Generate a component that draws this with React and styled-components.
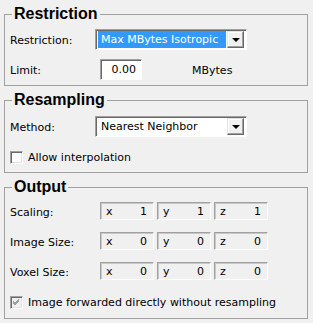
import React from "react";
import styled, { createGlobalStyle } from "styled-components";

const GlobalStyle = createGlobalStyle`
  body {
    margin: 0;
    background: #f0f0f0;
    font-family: "DejaVu Sans", "Liberation Sans", sans-serif;
    font-size: 11px;
    color: #000;
  }
`;

const Page = styled.div`
  display: flex;
  flex-direction: column;
  gap: 5px;
  padding: 5px 5px 0 4px;
  width: 313px;
  box-sizing: border-box;
`;

const Group = styled.fieldset`
  margin: 0;
  padding: 0 5px;
  border: 1px solid #a0a0a0;
  min-width: 0;
`;

const Title = styled.legend`
  font-family: "Liberation Sans", Arial, sans-serif;
  font-weight: bold;
  font-size: 16px;
  line-height: 18px;
  padding: 0 2px;
  margin-left: 2px;
`;

const Body = styled.div`
  display: flex;
  flex-direction: column;
  gap: ${(p) => p.$gap}px;
  padding-top: ${(p) => p.$top}px;
  padding-bottom: ${(p) => p.$bottom}px;
`;

const Row = styled.div`
  display: flex;
  align-items: center;
  height: ${(p) => p.$h || 21}px;
`;

const Label = styled.span`
  width: 85px;
  flex: none;
  padding-top: 2px;
`;

const Combo = styled.div`
  width: 152px;
  height: 21px;
  box-sizing: border-box;
  display: flex;
  align-items: center;
  padding: 1px 2px 1px 2px;
  background: #fff;
  border: 1px solid;
  border-color: #a0a0a0 #fff #fff #a0a0a0;
  box-shadow: inset 1px 1px 0 #696969;
`;

const ComboText = styled.div`
  flex: 1;
  height: 17px;
  line-height: 17px;
  padding-left: 3px;
  margin-right: 1px;
  white-space: nowrap;
  overflow: hidden;
  background: ${(p) => (p.$selected ? "#3399ff" : "#fff")};
  color: ${(p) => (p.$selected ? "#fff" : "#000")};
`;

const DropButton = styled.div`
  width: 17px;
  height: 17px;
  box-sizing: border-box;
  flex: none;
  background: #f0f0f0;
  border: 1px solid;
  border-color: #e3e3e3 #696969 #696969 #e3e3e3;
  box-shadow: inset -1px -1px 0 #a0a0a0, inset 1px 1px 0 #fff;
  display: flex;
  align-items: center;
  justify-content: center;

  &::after {
    content: "";
    border-left: 4px solid transparent;
    border-right: 4px solid transparent;
    border-top: 4px solid #000;
  }
`;

const TextInput = styled.div`
  margin-left: 5px;
  width: 42px;
  height: 21px;
  box-sizing: border-box;
  background: #fff;
  border: 1px solid;
  border-color: #a0a0a0 #fff #fff #a0a0a0;
  box-shadow: inset 1px 1px 0 #696969;
  text-align: right;
  padding: 0 5px;
  line-height: 20px;
`;

const Unit = styled.span`
  margin-left: 50px;
  padding-top: 2px;
`;

const Fields = styled.div`
  display: flex;
  gap: 3px;
  margin-left: 5px;
`;

const Field = styled.div`
  width: 54px;
  height: 18px;
  box-sizing: border-box;
  display: flex;
  justify-content: space-between;
  align-items: center;
  padding: 1px 6px 0 5px;
  border: 1px solid;
  border-color: #a0a0a0 #fff #fff #a0a0a0;
  box-shadow: inset 1px 1px 0 #c8c8c8;
`;

const CheckRow = styled.label`
  display: flex;
  align-items: center;
  gap: 5px;
  height: 13px;
`;

const Box = styled.span`
  width: 13px;
  height: 13px;
  box-sizing: border-box;
  flex: none;
  background: ${(p) => (p.$disabled ? "#f0f0f0" : "#fff")};
  border: 1px solid;
  border-color: #a0a0a0 #fff #fff #a0a0a0;
  box-shadow: inset 1px 1px 0 #696969, inset -1px -1px 0 #e3e3e3;
  display: flex;
  align-items: center;
  justify-content: center;
`;

const Check = () => (
  <svg width="9" height="9" viewBox="0 0 9 9">
    <path d="M1 4 L3 6 L7 2 M1 5 L3 7 L7 3 M1 3 L3 5 L7 1" stroke="#a0a0a0" strokeWidth="1" fill="none" />
  </svg>
);

const outputRows = [
  { label: "Scaling:", values: ["1", "1", "1"] },
  { label: "Image Size:", values: ["0", "0", "0"] },
  { label: "Voxel Size:", values: ["0", "0", "0"] },
];

export default function App() {
  return (
    <>
      <GlobalStyle />
      <Page>
        <Group>
          <Title>Restriction</Title>
          <Body $top={6} $gap={9} $bottom={5}>
            <Row>
              <Label>Restriction:</Label>
              <Combo>
                <ComboText $selected>Max MBytes Isotropic</ComboText>
                <DropButton />
              </Combo>
            </Row>
            <Row>
              <Label>Limit:</Label>
              <TextInput>0.00</TextInput>
              <Unit>MBytes</Unit>
            </Row>
          </Body>
        </Group>

        <Group>
          <Title>Resampling</Title>
          <Body $top={7} $gap={14} $bottom={8}>
            <Row>
              <Label>Method:</Label>
              <Combo>
                <ComboText>Nearest Neighbor</ComboText>
                <DropButton />
              </Combo>
            </Row>
            <CheckRow>
              <Box />
              Allow interpolation
            </CheckRow>
          </Body>
        </Group>

        <Group>
          <Title>Output</Title>
          <Body $top={6} $gap={12} $bottom={9}>
            {outputRows.map((r) => (
              <Row key={r.label} $h={18}>
                <Label>{r.label}</Label>
                <Fields>
                  {["x", "y", "z"].map((axis, i) => (
                    <Field key={axis}>
                      <span>{axis}</span>
                      <span>{r.values[i]}</span>
                    </Field>
                  ))}
                </Fields>
              </Row>
            ))}
            <CheckRow style={{ marginTop: 4 }}>
              <Box $disabled>
                <Check />
              </Box>
              Image forwarded directly without resampling
            </CheckRow>
          </Body>
        </Group>
      </Page>
    </>
  );
}
